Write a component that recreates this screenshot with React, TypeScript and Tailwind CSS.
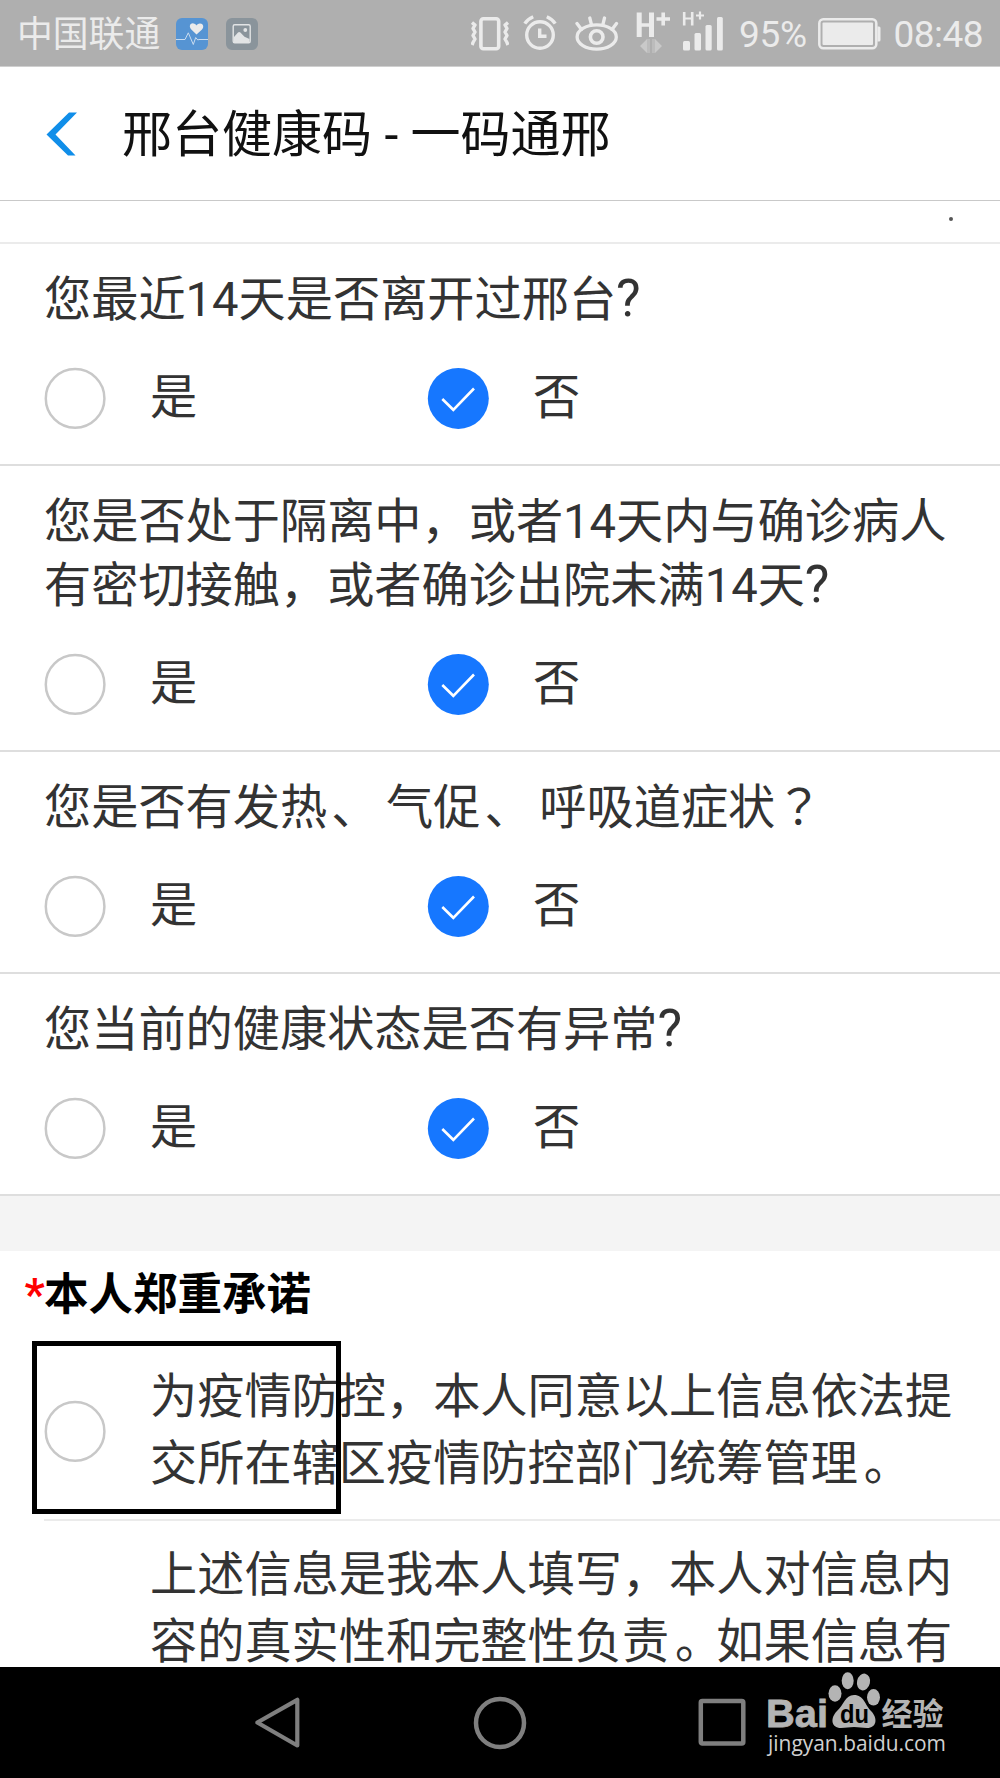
import React, { useState } from 'react';

type Answer = 'yes' | 'no';

const questions: { id: string; lines: string[] }[] = [
  { id: 'left-city', lines: ['您最近14天是否离开过邢台?'] },
  {
    id: 'contact',
    lines: ['您是否处于隔离中，或者14天内与确诊病人', '有密切接触，或者确诊出院未满14天?'],
  },
  { id: 'symptoms', lines: ['您是否有发热、 气促、 呼吸道症状？'] },
  { id: 'status', lines: ['您当前的健康状态是否有异常?'] },
];

// Places full-width punctuation nearer the middle of its cell
function Line({ text }: { text: string }) {
  return (
    <>
      {text.split(/([、。？?])/).map((part, i) => {
        if (part === '？') {
          return (
            <span key={i} className="font-['Noto_Sans_CJK_TC',sans-serif] leading-none">
              {part}
            </span>
          );
        }
        if (part === '?') {
          return (
            <span key={i} className="text-[52px] leading-none">
              {part}
            </span>
          );
        }
        if (part === '、') {
          return (
            <span key={i} className="mr-[-4px] pl-[4px]">
              {part}
            </span>
          );
        }
        if (part === '。') {
          return (
            <span key={i} className="mr-[-6px] pl-[6px]">
              {part}
            </span>
          );
        }
        return part;
      })}
    </>
  );
}

function StatusBar() {
  return (
    <div className="flex h-[67px] shrink-0 items-center border-b border-[#cfcfcf] bg-[#afafaf] pl-[17px] text-[#ebebeb]">
      <span className="w-[159px] pt-[3px] text-[35.8px] leading-[66px] whitespace-nowrap">中国联通</span>

      {/* Health app notification */}
      <svg width="32" height="32" viewBox="0 0 32 32" className="mt-[2px] shrink-0">
        <rect width="32" height="32" rx="6" fill="#5694d3" />
        <path
          d="M20.500 16.500 L15.300 11.400 C12.300 8.200 14.500 5 17.400 5.400 C19 5.500 20 6.400 20.500 7.400 C21 6.400 22.100 5.400 23.900 5.400 C27 5.200 28.500 8.700 26 11.500 Z"
          fill="#ebebeb"
        />
        <path
          d="M0 21.500 H9 L12.300 14.800 L17.300 26.500 L19.700 19.500 L21.800 22 L23 21.500 H32"
          fill="none"
          stroke="#c9dcf0"
          strokeWidth="1"
        />
      </svg>

      {/* Screenshot notification */}
      <svg width="32" height="32" viewBox="0 0 32 32" className="mt-[2px] ml-[18px] shrink-0">
        <rect width="32" height="32" rx="6" fill="#8a949b" />
        <rect x="7.200" y="6.700" width="17" height="18" rx="1.500" fill="none" stroke="#e2e4e5" strokeWidth="1.400" />
        <circle cx="19.300" cy="12" r="1.900" fill="#e2e4e5" />
        <path d="M8 19 L12 14.500 Q13.200 13.600 14.400 14.600 L18.500 18.800 L23.500 21 V24 H8 Z" fill="#e2e4e5" />
      </svg>

      {/* Vibrate */}
      <svg width="38" height="34" viewBox="0 0 38 34" className="mt-[1px] ml-[213px] shrink-0">
        <g fill="none" stroke="#ebebeb" strokeWidth="3.600">
          <rect x="9.900" y="1.800" width="17.800" height="30" rx="2.500" />
          <path
            d="M1 5.500 L4 8 L2 11.500 L4 15 L2 18.500 L4 22 L2 25.500 L1 28 M37 5.500 L34 8 L36 11.500 L34 15 L36 18.500 L34 22 L36 25.500 L37 28"
            strokeWidth="3.400"
            strokeLinejoin="round"
          />
        </g>
      </svg>

      {/* Alarm */}
      <svg width="34" height="36" viewBox="0 0 34 36" className="ml-[14px] shrink-0">
        <g fill="none" stroke="#ebebeb" strokeWidth="3.400">
          <circle cx="17" cy="20" r="13.300" />
          <path d="M16.700 13.500 V21.300 H23.500" />
          <path d="M1.800 8.600 Q4.500 4.400 10.200 1.800 M23.800 1.800 Q29.500 4.400 32.200 8.600" />
        </g>
      </svg>

      {/* Eye comfort */}
      <svg width="44" height="36" viewBox="0 0 44 36" className="ml-[18px] shrink-0">
        <g fill="none" stroke="#ebebeb" strokeWidth="3.300" strokeLinecap="round">
          <ellipse cx="21.700" cy="22" rx="19.600" ry="12.200" />
          <circle cx="21.700" cy="22" r="6.300" strokeWidth="3.600" />
          <path d="M2 8.500 L6.500 14.500 M14.800 3 L16.300 9 M29.500 3 L28 9 M41.500 8.500 L37 14.500" />
        </g>
      </svg>

      {/* Mobile data H+ */}
      <svg width="36" height="44" viewBox="0 0 36 44" className="mt-[2px] ml-[17px] shrink-0">
        <path d="M3.200 0.500 V25 M15.500 0.500 V25" stroke="#ebebeb" strokeWidth="5" />
        <path d="M3 13 H16 M20.500 7 H34 M27.200 0.500 V13.500" stroke="#ebebeb" strokeWidth="3.600" />
        <path d="M4 34 L11 27 V41 Z M26 34 L19 27 V41 Z" fill="#c9c9c9" />
        <path d="M11 27 H14 V41 H11 Z M16 27 H19 V41 H16 Z" fill="#bcbcbc" />
      </svg>

      {/* Signal */}
      <svg width="42" height="40" viewBox="0 0 42 40" className="mb-[5px] ml-[10px] shrink-0">
        <path d="M2.200 1 V14.500 M10.200 1 V14.500" stroke="#ebebeb" strokeWidth="2.600" />
        <path d="M2 7.500 H10 M14 4.500 H22 M18 0.500 V8.500" stroke="#ebebeb" strokeWidth="2.200" />
        <g fill="#ebebeb">
          <rect x="1" y="30" width="7" height="9.500" rx="1.500" />
          <rect x="12.500" y="22" width="6.500" height="17.500" rx="1.500" />
          <rect x="23.500" y="14" width="6.200" height="25.500" rx="1.500" />
          <rect x="35" y="6" width="5.800" height="33.500" rx="1.500" />
        </g>
      </svg>

      <span className="ml-[15px] w-[79px] pt-[3px] text-[37px] leading-[68px] tracking-[-0.3px]">95%</span>

      {/* Battery */}
      <svg width="63" height="32" viewBox="0 0 63 32" className="mt-[2px] shrink-0">
        <rect x="1.300" y="1.300" width="57" height="29" rx="4" fill="none" stroke="#ebebeb" strokeWidth="2.500" />
        <rect x="4.500" y="4.500" width="50.500" height="22.600" rx="1" fill="#ebebeb" />
        <path d="M59.500 8.500 H61 Q62.500 8.500 62.500 10 V22 Q62.500 23.500 61 23.500 H59.500 Z" fill="#ebebeb" />
      </svg>

      <span className="ml-[12.500px] pt-[3px] text-[37px] leading-[68px] tracking-[-0.5px]">08:48</span>
    </div>
  );
}

function Header() {
  return (
    <header className="flex h-[134px] shrink-0 items-center border-b border-[#c9c9c9] pl-[46px]">
      <svg width="32" height="44" viewBox="0 0 32 44" className="shrink-0">
        <path d="M23 0.500 H31 L9.500 22.500 L29.500 43.500 H22 L0.500 22.500 Z" fill="#108ee9" />
      </svg>
      <h1 className="ml-[44px] pt-[2px] text-[50px] leading-[66px] whitespace-nowrap text-[#111111]">
        邢台健康码 - 一码通邢
      </h1>
    </header>
  );
}

function Radio({ checked }: { checked: boolean }) {
  return (
    <svg width="62" height="62" viewBox="0 0 62 62" fill="none" className="shrink-0">
      {checked ? (
        <>
          <circle cx="31.300" cy="31.400" r="30.500" fill="#1677ff" />
          <path d="M15.300 32 L26.300 42.800 L47 21.500" stroke="#ffffff" strokeWidth="2.600" />
        </>
      ) : (
        <circle cx="31.100" cy="31.400" r="29.300" stroke="#c8c8c8" strokeWidth="2.500" />
      )}
    </svg>
  );
}

function Option({
  label,
  checked,
  onSelect,
}: {
  label: string;
  checked: boolean;
  onSelect: () => void;
}) {
  return (
    <button type="button" onClick={onSelect} className="flex h-[62px] w-[383px] items-center text-left">
      <Radio checked={checked} />
      <span className="ml-[44px]">{label}</span>
    </button>
  );
}

function Question({ lines }: { lines: string[] }) {
  const [answer, setAnswer] = useState<Answer>('no');

  return (
    <section className="border-b-2 border-[#dedede] pt-[24px] pb-[35px] pl-[44px]">
      <h2>
        {lines.map((line) => (
          <span key={line} className="block h-[64px] leading-[64px] whitespace-pre">
            <Line text={line} />
          </span>
        ))}
      </h2>
      <div className="mt-[35px] flex">
        <Option label="是" checked={answer === 'yes'} onSelect={() => setAnswer('yes')} />
        <Option label="否" checked={answer === 'no'} onSelect={() => setAnswer('no')} />
      </div>
    </section>
  );
}

function Commitment() {
  return (
    <section>
      <h2 className="flex h-[84px] items-center pt-[4px] pl-[24.500px] text-[44.500px] font-bold text-black">
        <span className="w-[19.500px] text-[#ff0000]">*</span>
        本人郑重承诺
      </h2>

      <div className="relative ml-[44px] flex h-[186px] items-center border-b-2 border-[#ebebeb] pt-[8px]">
        <Radio checked={false} />
        <p className="ml-[44px] leading-[67px] whitespace-nowrap">
          <Line text="为疫情防控，本人同意以上信息依法提" />
          <br />
          <Line text="交所在辖区疫情防控部门统筹管理。" />
        </p>
        {/* Highlight frame over the agreement radio */}
        <div className="absolute top-[6px] left-[-12px] h-[173px] w-[309px] border-[5px] border-black" />
      </div>

      <p className="mt-[21px] ml-[150px] leading-[67px] whitespace-nowrap">
        <Line text="上述信息是我本人填写，本人对信息内" />
        <br />
        <Line text="容的真实性和完整性负责。如果信息有" />
      </p>
    </section>
  );
}

function Watermark() {
  return (
    <svg width="190" height="100" viewBox="0 0 190 100" className="absolute top-0 right-[50px]">
      <g fill="#b4b4b4">
        <text
          x="6"
          y="60"
          fontSize="39"
          fontWeight="700"
          textLength="62"
          lengthAdjust="spacingAndGlyphs"
          stroke="#b4b4b4"
          strokeWidth="0.800"
          fontFamily="'Liberation Sans', Arial, sans-serif"
        >
          Bai
        </text>
        <ellipse cx="75" cy="26.500" rx="6.500" ry="8.300" />
        <ellipse cx="87.700" cy="13.700" rx="6" ry="8.500" />
        <ellipse cx="103.500" cy="15" rx="6.500" ry="8.500" transform="rotate(12 103.500 15)" />
        <ellipse cx="113.500" cy="30.300" rx="6.500" ry="8.300" />
        <path d="M94 28 C104 28 105 38 111 44 C118 51 117 61 107 61 C102 61 99 60 94 60 C89 60 86 61 81 61 C71 61 70 51 77 44 C84 38 85 28 94 28 Z" />
        <text
          x="80"
          y="56"
          fontSize="26"
          fontWeight="700"
          textLength="29"
          lengthAdjust="spacingAndGlyphs"
          fill="#000000"
          fontFamily="'Liberation Sans', Arial, sans-serif"
        >
          du
        </text>
        <text
          x="121.500"
          y="58"
          fontSize="31"
          fontWeight="700"
          textLength="62"
          fontFamily="'Noto Sans CJK SC', sans-serif"
        >
          经验
        </text>
      </g>
      <text
        x="8"
        y="83.500"
        fontSize="21"
        textLength="178"
        lengthAdjust="spacingAndGlyphs"
        fill="#d0d0d0"
        fontFamily="'Open Sans', 'Noto Sans', sans-serif"
      >
        jingyan.baidu.com
      </text>
    </svg>
  );
}

function NavigationBar() {
  return (
    <nav className="relative flex h-[111px] shrink-0 items-center bg-black pl-[253px]">
      <svg width="48" height="54" viewBox="0 0 48 54" className="shrink-0">
        <path d="M44.300 3.800 V49.500 L4.300 26.500 Z" fill="none" stroke="#7f7f7f" strokeWidth="4.200" strokeLinejoin="round" />
      </svg>
      <svg width="54" height="54" viewBox="0 0 54 54" className="ml-[171.500px] shrink-0">
        <circle cx="27" cy="27" r="24" fill="none" stroke="#7f7f7f" strokeWidth="4.500" />
      </svg>
      <svg width="48" height="50" viewBox="0 0 48 50" className="ml-[171.500px] shrink-0">
        <rect x="2.800" y="3" width="42.500" height="42.500" rx="1.500" fill="none" stroke="#7f7f7f" strokeWidth="4.500" />
      </svg>
      <Watermark />
    </nav>
  );
}

export default function App() {
  return (
    <div className="flex h-[1778px] w-[1000px] flex-col overflow-hidden bg-white font-[Roboto,'Noto_Sans_CJK_SC',sans-serif] text-[47.200px] text-[#333333]">
      <StatusBar />
      <Header />

      <main className="min-h-0 flex-1 overflow-hidden">
        {/* Tail of the previous form block */}
        <div className="flex h-[43px] justify-end border-b-2 border-[#ebebeb] pt-[16px] pr-[47px]">
          <span className="size-[4px] rounded-full bg-[#555555]" />
        </div>

        {questions.map((q) => (
          <Question key={q.id} lines={q.lines} />
        ))}

        <div className="h-[55px] bg-[#f4f4f4]" />

        <Commitment />
      </main>

      <NavigationBar />
    </div>
  );
}
